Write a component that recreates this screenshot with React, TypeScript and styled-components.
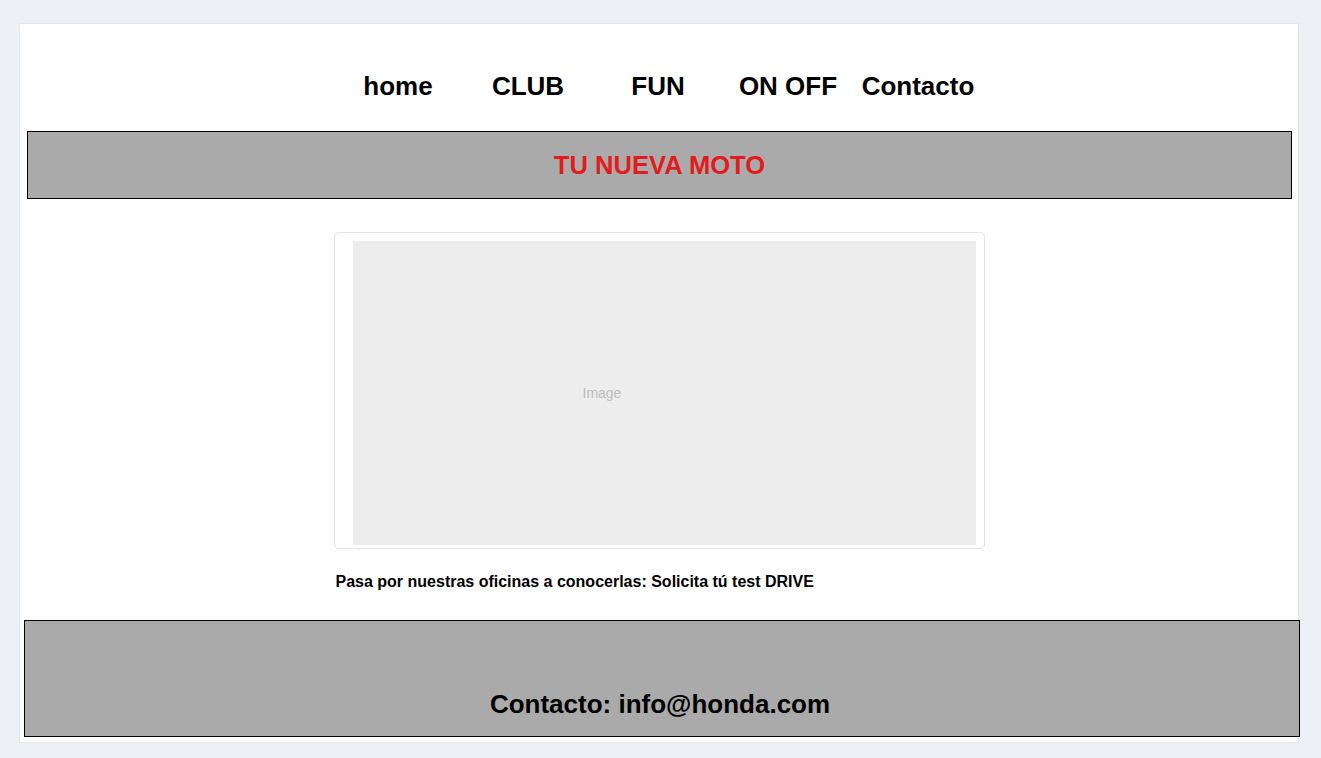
import React from 'react'
import styled, { createGlobalStyle } from 'styled-components'

const GlobalStyle = createGlobalStyle`
  *, *::before, *::after {
    box-sizing: border-box;
  }
  html, body {
    margin: 0;
    padding: 0;
    background: #edf0f5;
    font-family: "Liberation Sans", Arial, sans-serif;
    color: #000;
  }
`

const Page = styled.div`
  padding: 23px 0 15px 19px;
`

const Card = styled.div`
  width: 1280px;
  height: 720px;
  background: #fff;
  border: 1px solid #e3e7ec;
  display: flex;
  flex-direction: column;
`

const Nav = styled.nav`
  height: 107px;
  padding: 46px 2px 0 0;
  display: flex;
  justify-content: center;
  align-items: flex-start;
`

const NavItem = styled.a`
  width: 130px;
  text-align: center;
  font-size: 26px;
  line-height: 32px;
  font-weight: bold;
  color: #000;
  text-decoration: none;
  cursor: pointer;
`

const Banner = styled.header`
  height: 68px;
  margin: 0 6px 0 7px;
  background: #aaaaaa;
  border: 1px solid #000;
  display: flex;
  align-items: center;
  justify-content: center;
`

const Title = styled.h1`
  margin: 0;
  font-size: 25.6px;
  font-weight: bold;
  color: #e21c1c;
  line-height: 30px;
`

const Main = styled.main`
  width: 651px;
  margin: 33px auto 0;
`

const ImageCard = styled.figure`
  margin: 0;
  height: 317px;
  border: 1px solid #e3e3e3;
  border-radius: 5px;
  padding: 8px 8px 3px 18px;
`

const Placeholder = styled.div`
  height: 100%;
  background: #ededed;
  display: flex;
  align-items: center;
  padding-left: 230px;
  font-size: 14px;
  color: #bdbdbd;
`

const Caption = styled.p`
  margin: 24px 0 0 2px;
  font-size: 16px;
  line-height: 18px;
  font-weight: bold;
`

const Footer = styled.footer`
  height: 117px;
  width: 1276px;
  margin: 29px 0 0 4px;
  background: #aaaaaa;
  border: 1px solid #000;
  display: flex;
  align-items: flex-end;
  justify-content: center;
  padding: 0 4px 16px 0;
  font-size: 26px;
  line-height: 32px;
  font-weight: bold;
`

const links = ['home', 'CLUB', 'FUN', 'ON OFF', 'Contacto']

export default function App() {
  return (
    <>
      <GlobalStyle />
      <Page>
        <Card>
          <Nav>
            {links.map(l => (
              <NavItem key={l}>{l}</NavItem>
            ))}
          </Nav>
          <Banner>
            <Title>TU NUEVA MOTO</Title>
          </Banner>
          <Main>
            <ImageCard>
              <Placeholder>Image</Placeholder>
            </ImageCard>
            <Caption>Pasa por nuestras oficinas a conocerlas: Solicita tú test DRIVE</Caption>
          </Main>
          <Footer>Contacto: info@honda.com</Footer>
        </Card>
      </Page>
    </>
  )
}
